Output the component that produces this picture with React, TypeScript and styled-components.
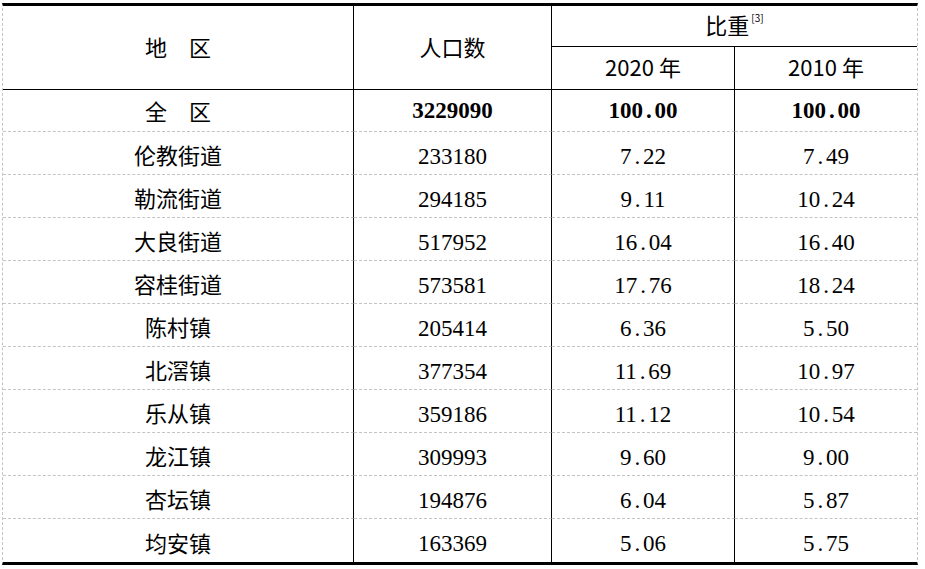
import React from 'react';
import styled, { createGlobalStyle } from 'styled-components';

const GlobalStyle = createGlobalStyle`
  html, body {
    margin: 0;
    padding: 0;
    background: #ffffff;
  }
`;

const rows: [string, string, string, string][] = [
    ['伦教街道', '233180', '7.22', '7.49'],
    ['勒流街道', '294185', '9.11', '10.24'],
    ['大良街道', '517952', '16.04', '16.40'],
    ['容桂街道', '573581', '17.76', '18.24'],
    ['陈村镇', '205414', '6.36', '5.50'],
    ['北滘镇', '377354', '11.69', '10.97'],
    ['乐从镇', '359186', '11.12', '10.54'],
    ['龙江镇', '309993', '9.60', '9.00'],
    ['杏坛镇', '194876', '6.04', '5.87'],
    ['均安镇', '163369', '5.06', '5.75'],
];

const Page = styled.div`
  padding: 3px 0 0 2px;
`;

const Table = styled.div`
  display: grid;
  width: max-content;
  grid-template-columns: 351px 198px 183px 182px;
  grid-template-rows: 41px 43px 42px repeat(10, 43px);
  border-top: 3px solid #000;
  border-bottom: 3px solid #000;
  border-left: 1px dashed #c4c4c4;
  border-right: 1px dashed #c4c4c4;
  color: #000;
`;

const Cell = styled.div<{ $last?: boolean; $head?: boolean; $end?: boolean; $rows?: number; $cols?: number }>`
  box-sizing: border-box;
  display: flex;
  align-items: center;
  justify-content: center;
  grid-row: span ${p => p.$rows ?? 1};
  grid-column: span ${p => p.$cols ?? 1};
  border-right: ${p => (p.$last ? 'none' : '1px solid #000')};
  border-bottom: ${p => (p.$end ? 'none' : p.$head ? '1px solid #000' : '1px dashed #c4c4c4')};
`;

const HeadText = styled.span`
  display: inline-block;
  font-family: "Noto Sans CJK SC", sans-serif;
  font-size: 22px;
  line-height: 1;
  padding-bottom: 4px;
`;

const Sup = styled.sup`
  font-family: "Noto Sans CJK SC", sans-serif;
  font-size: 10px;
  line-height: 1;
  vertical-align: top;
  margin-left: 2px;
`;

const Label = styled.span<{ $lift?: boolean }>`
  display: inline-block;
  font-family: "Noto Sans CJK SC", sans-serif;
  font-size: 22px;
  line-height: 1;
  padding-top: ${p => (p.$lift ? 0 : 2)}px;
  padding-bottom: ${p => (p.$lift ? 2 : 0)}px;
`;

const Num = styled.span<{ $bold?: boolean }>`
  display: inline-block;
  font-family: "Liberation Serif", serif;
  font-size: 23px;
  font-weight: ${p => (p.$bold ? 700 : 400)};
  line-height: 1;
  padding-top: ${p => (p.$bold ? 0 : 6)}px;
`;

const Dot = styled.span`
  display: inline-block;
  width: 0.5em;
  text-align: center;
`;

const Value: React.FC<{ v: string; bold?: boolean }> = ({ v, bold }) => {
    const [a, b] = v.split('.');
    return (
        <Num $bold={bold}>
            {a}
            {b !== undefined && (
                <>
                    <Dot>.</Dot>
                    {b}
                </>
            )}
        </Num>
    );
};

export default function App() {
    return (
        <Page>
            <GlobalStyle />
            <Table>
                <Cell $head $rows={2}>
                    <HeadText>地　区</HeadText>
                </Cell>
                <Cell $head $rows={2}>
                    <HeadText>人口数</HeadText>
                </Cell>
                <Cell $head $last $cols={2}>
                    <HeadText>
                        比重<Sup>[3]</Sup>
                    </HeadText>
                </Cell>
                <Cell $head>
                    <HeadText>2020 年</HeadText>
                </Cell>
                <Cell $head $last>
                    <HeadText>2010 年</HeadText>
                </Cell>

                <Cell>
                    <Label $lift>全　区</Label>
                </Cell>
                <Cell>
                    <Value v="3229090" bold />
                </Cell>
                <Cell>
                    <Value v="100.00" bold />
                </Cell>
                <Cell $last>
                    <Value v="100.00" bold />
                </Cell>

                {rows.map((r, i) => {
                    const end = i === rows.length - 1;
                    return (
                        <React.Fragment key={r[0]}>
                            <Cell $end={end}>
                                <Label>{r[0]}</Label>
                            </Cell>
                            <Cell $end={end}>
                                <Value v={r[1]} />
                            </Cell>
                            <Cell $end={end}>
                                <Value v={r[2]} />
                            </Cell>
                            <Cell $end={end} $last>
                                <Value v={r[3]} />
                            </Cell>
                        </React.Fragment>
                    );
                })}
            </Table>
        </Page>
    );
}
